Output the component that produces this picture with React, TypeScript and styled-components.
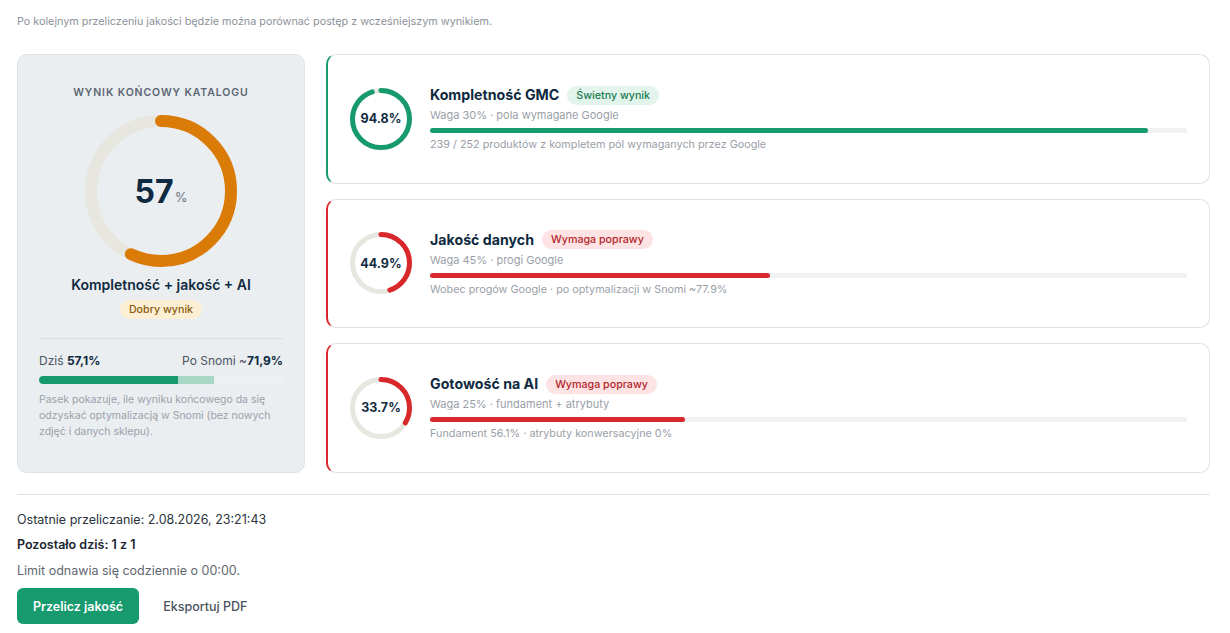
import * as React from 'react';
import styled, { createGlobalStyle } from 'styled-components';

const GlobalStyle = createGlobalStyle`
  * { box-sizing: border-box; }
  body {
    margin: 0;
    background: #ffffff;
    font-family: Inter, "Noto Sans", "Liberation Sans", sans-serif;
    color: #0f2a40;
  }
`;

const colors = {
  green: '#169a6e',
  red: '#d9282c',
  orange: '#da7a07',
  track: '#e7e6df',
  dark: '#0f2a40',
  muted: '#9aa0a8',
};

const Page = styled.div`
  padding: 15px 20px 0 17px;
`;

const Intro = styled.p`
  margin: 0 0 25px;
  font-size: 10.8px;
  line-height: 14px;
  color: #8c929a;
`;

const Layout = styled.div`
  display: grid;
  grid-template-columns: 288px 1fr;
  gap: 21px;
`;

const SummaryPanel = styled.section`
  background: #eaeef1;
  border: 1px solid #dfe3e7;
  border-radius: 10px;
  padding: 31px 21px 20px;
  display: flex;
  flex-direction: column;
  align-items: center;
`;

const PanelTitle = styled.div`
  font-size: 10.5px;
  font-weight: 600;
  letter-spacing: 0.9px;
  color: #5c6673;
  line-height: 14px;
`;

const DonutWrap = styled.div`
  position: relative;
  width: 152px;
  height: 152px;
  margin-top: 15px;
`;

const DonutLabel = styled.div`
  position: absolute;
  inset: 0;
  display: flex;
  align-items: center;
  justify-content: center;
  gap: 1px;
  padding-top: 1px;
`;

const BigNumber = styled.span`
  font-size: 32px;
  font-weight: 700;
  color: ${colors.dark};
  line-height: 1;
`;

const BigUnit = styled.span`
  font-size: 13px;
  color: #6d7580;
  margin-top: 10px;
`;

const PanelSubtitle = styled.div`
  margin-top: 9px;
  font-size: 14px;
  font-weight: 600;
  color: ${colors.dark};
  line-height: 18px;
`;

const Badge = styled.span<{ $tone: 'green' | 'red' | 'yellow' }>`
  display: inline-flex;
  align-items: center;
  height: 19px;
  padding: 0 9px;
  border-radius: 10px;
  font-size: 10.7px;
  font-weight: 500;
  white-space: nowrap;
  background: ${p => (p.$tone === 'green' ? '#e2f4eb' : p.$tone === 'red' ? '#fde3e3' : '#fcefd3')};
  color: ${p => (p.$tone === 'green' ? '#1b7a52' : p.$tone === 'red' ? '#b3262a' : '#8a5c0e')};
`;

const PanelBadge = styled(Badge)`
  margin-top: 6px;
`;

const Divider = styled.hr`
  align-self: stretch;
  border: 0;
  border-top: 1px solid #d9dee3;
  margin: 19px 0 0;
`;

const ProgressRow = styled.div`
  align-self: stretch;
  display: flex;
  justify-content: space-between;
  margin-top: 14px;
  font-size: 12px;
  line-height: 16px;
  color: #4a535e;

  b {
    color: ${colors.dark};
    font-weight: 700;
  }
`;

const SplitBar = styled.div`
  align-self: stretch;
  position: relative;
  height: 8px;
  margin-top: 7px;
  border-radius: 4px;
  background: #edf0f2;
  overflow: hidden;
`;

const BarFill = styled.div<{ $color: string; $round?: boolean }>`
  position: absolute;
  left: 0;
  top: 0;
  bottom: 0;
  background: ${p => p.$color};
  border-radius: ${p => (p.$round ? '4px 0 0 4px' : '0')};
`;

const Caption = styled.p`
  align-self: stretch;
  margin: 8px 0 0;
  font-size: 10.5px;
  line-height: 16px;
  color: #9aa1a9;
`;

const CardStack = styled.div`
  display: flex;
  flex-direction: column;
  gap: 15px;
`;

const MetricCard = styled.article<{ $accent: string }>`
  flex: 1;
  display: flex;
  align-items: center;
  gap: 18px;
  min-height: 129.6px;
  padding: 0 22px 0 22px;
  background: #fff;
  border: 1px solid #e2e2e2;
  border-left: 2px solid ${p => p.$accent};
  border-radius: 10px;
`;

const RingWrap = styled.div`
  position: relative;
  flex: 0 0 62px;
  width: 62px;
  height: 62px;
`;

const RingLabel = styled.div`
  position: absolute;
  inset: 0;
  display: flex;
  align-items: center;
  justify-content: center;
  font-size: 12.5px;
  font-weight: 700;
  color: ${colors.dark};
`;

const CardBody = styled.div`
  flex: 1;
  display: flex;
  flex-direction: column;
`;

const TitleRow = styled.div`
  display: flex;
  align-items: center;
  gap: 8px;
`;

const CardTitle = styled.h3`
  margin: 0;
  font-size: 14.2px;
  font-weight: 700;
  line-height: 20px;
  color: ${colors.dark};
`;

const CardMeta = styled.div`
  margin-top: 3px;
  font-size: 11px;
  line-height: 14px;
  color: #9aa0a8;
`;

const ThinBar = styled.div`
  position: relative;
  height: 5px;
  margin-top: 6px;
  border-radius: 3px;
  background: #f0f1f3;
`;

const ThinFill = styled.div<{ $color: string }>`
  position: absolute;
  left: 0;
  top: 0;
  bottom: 0;
  border-radius: 3px;
  background: ${p => p.$color};
`;

const CardNote = styled.div`
  margin-top: 5px;
  font-size: 10.8px;
  line-height: 14px;
  color: #9aa0a8;
`;

const Footer = styled.footer`
  margin-top: 21px;
  border-top: 1px solid #e2e2e2;
  padding-top: 17px;
`;

const FooterLine = styled.div<{ $bold?: boolean; $muted?: boolean }>`
  font-size: 12.5px;
  line-height: 16px;
  margin-bottom: 9.5px;
  font-weight: ${p => (p.$bold ? 600 : 400)};
  color: ${p => (p.$muted ? '#5f6770' : p.$bold ? '#1a2430' : '#2b333c')};
`;

const Actions = styled.div`
  display: flex;
  align-items: center;
  gap: 8px;
`;

const PrimaryButton = styled.button`
  height: 36px;
  padding: 0 16px;
  border: 0;
  border-radius: 6px;
  background: ${colors.green};
  color: #fff;
  font-family: inherit;
  font-size: 12.5px;
  font-weight: 600;
  cursor: pointer;
`;

const GhostButton = styled.button`
  height: 36px;
  padding: 0 16px;
  border: 0;
  background: transparent;
  color: #4a525b;
  font-family: inherit;
  font-size: 12.5px;
  font-weight: 500;
  cursor: pointer;
`;

const Ring = ({ size, stroke, value, color }: { size: number; stroke: number; value: number; color: string }) => {
  const r = (size - stroke) / 2;
  const c = 2 * Math.PI * r;
  return (
    <svg width={size} height={size} viewBox={`0 0 ${size} ${size}`}>
      <circle cx={size / 2} cy={size / 2} r={r} fill="none" stroke={colors.track} strokeWidth={stroke} />
      <circle
        cx={size / 2}
        cy={size / 2}
        r={r}
        fill="none"
        stroke={color}
        strokeWidth={stroke}
        strokeLinecap="round"
        strokeDasharray={`${(c * value) / 100} ${c}`}
        transform={`rotate(-90 ${size / 2} ${size / 2})`}
      />
    </svg>
  );
};

const metrics = [
  {
    value: 94.8,
    title: 'Kompletność GMC',
    badge: 'Świetny wynik',
    tone: 'green' as const,
    color: colors.green,
    meta: 'Waga 30% · pola wymagane Google',
    note: '239 / 252 produktów z kompletem pól wymaganych przez Google',
  },
  {
    value: 44.9,
    title: 'Jakość danych',
    badge: 'Wymaga poprawy',
    tone: 'red' as const,
    color: colors.red,
    meta: 'Waga 45% · progi Google',
    note: 'Wobec progów Google · po optymalizacji w Snomi ~77.9%',
  },
  {
    value: 33.7,
    title: 'Gotowość na AI',
    badge: 'Wymaga poprawy',
    tone: 'red' as const,
    color: colors.red,
    meta: 'Waga 25% · fundament + atrybuty',
    note: 'Fundament 56.1% · atrybuty konwersacyjne 0%',
  },
];

export default function App() {
  const today = 57.1;
  const after = 71.9;
  return (
    <>
      <GlobalStyle />
      <Page>
        <Intro>Po kolejnym przeliczeniu jakości będzie można porównać postęp z wcześniejszym wynikiem.</Intro>
        <Layout>
          <SummaryPanel>
            <PanelTitle>WYNIK KOŃCOWY KATALOGU</PanelTitle>
            <DonutWrap>
              <Ring size={152} stroke={12} value={57} color={colors.orange} />
              <DonutLabel>
                <BigNumber>57</BigNumber>
                <BigUnit>%</BigUnit>
              </DonutLabel>
            </DonutWrap>
            <PanelSubtitle>Kompletność + jakość + AI</PanelSubtitle>
            <PanelBadge $tone="yellow">Dobry wynik</PanelBadge>
            <Divider />
            <ProgressRow>
              <span>
                Dziś <b>57,1%</b>
              </span>
              <span>
                Po Snomi ~<b>71,9%</b>
              </span>
            </ProgressRow>
            <SplitBar>
              <BarFill $color="#a6d8c5" style={{ width: `${after}%` }} />
              <BarFill $color={colors.green} $round style={{ width: `${today}%` }} />
            </SplitBar>
            <Caption>
              Pasek pokazuje, ile wyniku końcowego da się odzyskać optymalizacją w Snomi (bez nowych zdjęć i danych
              sklepu).
            </Caption>
          </SummaryPanel>
          <CardStack>
            {metrics.map(m => (
              <MetricCard key={m.title} $accent={m.color}>
                <RingWrap>
                  <Ring size={62} stroke={5} value={m.value} color={m.color} />
                  <RingLabel>{m.value.toFixed(1)}%</RingLabel>
                </RingWrap>
                <CardBody>
                  <TitleRow>
                    <CardTitle>{m.title}</CardTitle>
                    <Badge $tone={m.tone}>{m.badge}</Badge>
                  </TitleRow>
                  <CardMeta>{m.meta}</CardMeta>
                  <ThinBar>
                    <ThinFill $color={m.color} style={{ width: `${m.value}%` }} />
                  </ThinBar>
                  <CardNote>{m.note}</CardNote>
                </CardBody>
              </MetricCard>
            ))}
          </CardStack>
        </Layout>
        <Footer>
          <FooterLine>Ostatnie przeliczanie: 2.08.2026, 23:21:43</FooterLine>
          <FooterLine $bold>Pozostało dziś: 1 z 1</FooterLine>
          <FooterLine $muted>Limit odnawia się codziennie o 00:00.</FooterLine>
          <Actions>
            <PrimaryButton>Przelicz jakość</PrimaryButton>
            <GhostButton>Eksportuj PDF</GhostButton>
          </Actions>
        </Footer>
      </Page>
    </>
  );
}
